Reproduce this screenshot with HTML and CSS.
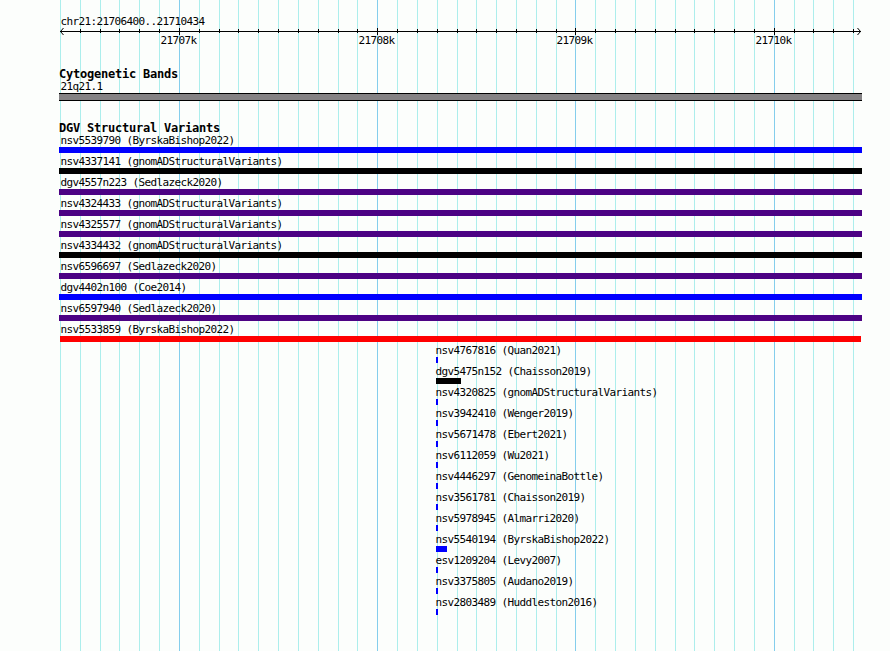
FILE: index.html
```
<!DOCTYPE html>
<html lang="en">
<head>
    <meta charset="UTF-8">
    <meta name="viewport" content="width=device-width, initial-scale=1.0">
    <title>chr21:21706400..21710434</title>
    <link rel="stylesheet" href="styles.css">
</head>
<body>
    <div class="panel">
        <svg class="grid" id="grid" width="890" height="651" shape-rendering="crispEdges"></svg>

        <div class="region">chr21:21706400..21710434</div>
        <svg class="scale" id="scale" width="890" height="22">
            <g class="axis">
                <path d="M60 5.5H861" shape-rendering="crispEdges"/>
                <path d="M63.5 2L60.5 5.5L63.5 9M857.5 2L860.5 5.5L857.5 9"/>
            </g>
        </svg>

        <h2 class="bands-title">Cytogenetic Bands</h2>
        <div class="band-label">21q21.1</div>
        <div class="band"></div>

        <h2 class="variants-title">DGV Structural Variants</h2>
        <div class="tracks">
            <div class="variant"><span>nsv5539790 (ByrskaBishop2022)</span><div class="bar blue"></div></div>
            <div class="variant"><span>nsv4337141 (gnomADStructuralVariants)</span><div class="bar black"></div></div>
            <div class="variant"><span>dgv4557n223 (Sedlazeck2020)</span><div class="bar purple"></div></div>
            <div class="variant"><span>nsv4324433 (gnomADStructuralVariants)</span><div class="bar purple"></div></div>
            <div class="variant"><span>nsv4325577 (gnomADStructuralVariants)</span><div class="bar purple"></div></div>
            <div class="variant"><span>nsv4334432 (gnomADStructuralVariants)</span><div class="bar black"></div></div>
            <div class="variant"><span>nsv6596697 (Sedlazeck2020)</span><div class="bar purple"></div></div>
            <div class="variant"><span>dgv4402n100 (Coe2014)</span><div class="bar blue"></div></div>
            <div class="variant"><span>nsv6597940 (Sedlazeck2020)</span><div class="bar purple"></div></div>
            <div class="variant"><span>nsv5533859 (ByrskaBishop2022)</span><div class="bar red"></div></div>
        </div>
        <!-- variants that start inside the region -->
        <div class="tracks inner">
            <div class="variant"><span>nsv4767816 (Quan2021)</span><div class="bar blue" style="width: 2px"></div></div>
            <div class="variant"><span>dgv5475n152 (Chaisson2019)</span><div class="bar black" style="width: 25px"></div></div>
            <div class="variant"><span>nsv4320825 (gnomADStructuralVariants)</span><div class="bar blue" style="width: 2px"></div></div>
            <div class="variant"><span>nsv3942410 (Wenger2019)</span><div class="bar blue" style="width: 2px"></div></div>
            <div class="variant"><span>nsv5671478 (Ebert2021)</span><div class="bar blue" style="width: 2px"></div></div>
            <div class="variant"><span>nsv6112059 (Wu2021)</span><div class="bar blue" style="width: 2px"></div></div>
            <div class="variant"><span>nsv4446297 (GenomeinaBottle)</span><div class="bar blue" style="width: 2px"></div></div>
            <div class="variant"><span>nsv3561781 (Chaisson2019)</span><div class="bar blue" style="width: 2px"></div></div>
            <div class="variant"><span>nsv5978945 (Almarri2020)</span><div class="bar blue" style="width: 2px"></div></div>
            <div class="variant"><span>nsv5540194 (ByrskaBishop2022)</span><div class="bar blue" style="width: 11px"></div></div>
            <div class="variant"><span>esv1209204 (Levy2007)</span><div class="bar blue" style="width: 2px"></div></div>
            <div class="variant"><span>nsv3375805 (Audano2019)</span><div class="bar blue" style="width: 2px"></div></div>
            <div class="variant"><span>nsv2803489 (Huddleston2016)</span><div class="bar blue" style="width: 2px"></div></div>
        </div>
    </div>

    <script>
        const start = 21706400;
        const end = 21710434;
        const left = 60;
        const width = 800;

        let lines = '';
        let ticks = '';
        for (let pos = start; pos <= end; pos += 100) {
            const x = Math.round(left + (pos - start) * width / (end - start + 1));
            const major = pos % 1000 === 0;
            lines += `<rect class="${major ? 'major' : 'minor'}" x="${x}" y="0" width="1" height="651"/>`;
            if (pos > start) {
                ticks += `<rect x="${x}" y="${major ? 2 : 3}" width="1" height="${major ? 7 : 4}"/>`;
            }
            if (major) {
                ticks += `<text x="${x - 18.6}" y="18">${pos / 1000}k</text>`;
            }
        }
        document.getElementById('grid').innerHTML = lines;
        document.getElementById('scale').innerHTML += ticks;
    </script>
</body>
</html>
```

FILE: styles.css
```
body {
    margin: 0;
    background: #fcfefc;
    color: #000;
    font-family: "DejaVu Sans Mono", monospace;
    font-size: 11px;
    letter-spacing: -0.622px;
}
.panel {
    position: relative;
    width: 890px;
    height: 651px;
    overflow: hidden;
    isolation: isolate;
}
.grid {
    position: absolute;
    top: 0;
    left: 0;
    z-index: -1;
}
.minor {
    fill: #aceeec;
}
.major {
    fill: #84ceec;
}
.region {
    height: 13px;
    padding: 13px 0 0 60.4px;
    line-height: 18px;
}
.scale {
    display: block;
}
.axis {
    fill: none;
    stroke: #000;
}
h2 {
    margin: 0;
    padding-left: 59px;
    font-size: 12px;
    line-height: 14px;
    letter-spacing: -0.224px;
}
.bands-title {
    height: 11px;
    padding-top: 19px;
}
.band-label {
    height: 15px;
    padding-left: 60.4px;
    line-height: 18px;
}
.band {
    box-sizing: border-box;
    width: 803px;
    height: 8px;
    margin-left: 59px;
    background: #848284;
    border: solid #000;
    border-width: 1px 0;
}
.variants-title {
    height: 11px;
    padding-top: 20px;
}
.tracks {
    width: 803px;
    margin-left: 59px;
}
.inner {
    width: 425px;
    margin-left: 436px;
}
.variant {
    height: 21px;
}
.variant span {
    display: block;
    height: 15px;
    padding-left: 1.4px;
    line-height: 18px;
    white-space: nowrap;
}
.inner span {
    padding-left: 0;
    margin-left: -0.6px;
}
.bar {
    height: 6px;
}
.blue {
    background: #0000ff;
}
.black {
    background: #000;
}
.purple {
    background: #4c0284;
}
.red {
    margin: 0 1px;
    background: #ff0000;
}
```
